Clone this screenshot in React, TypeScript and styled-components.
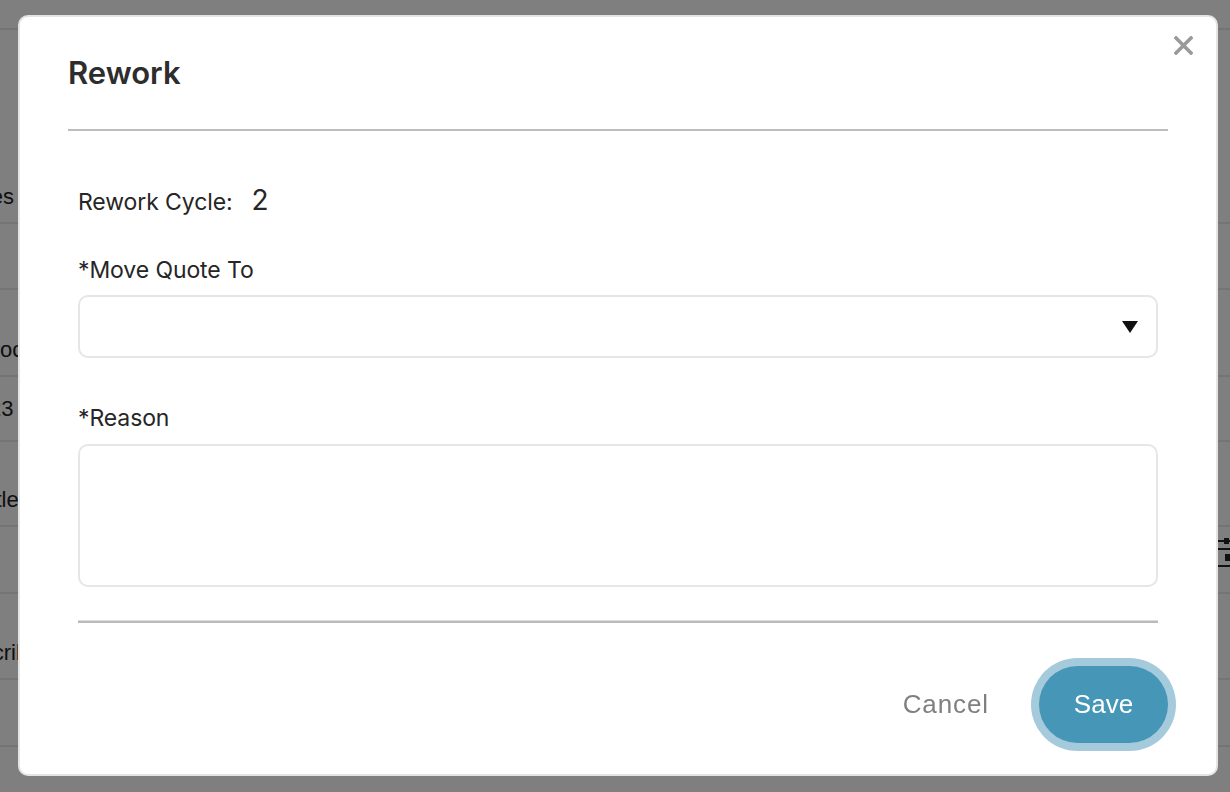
import React from "react";
import styled, { createGlobalStyle } from "styled-components";

const GlobalStyle = createGlobalStyle`
  html, body { margin: 0; padding: 0; }
  body {
    width: 1230px;
    height: 792px;
    overflow: hidden;
    background: #ffffff;
    font-family: "Liberation Sans", Arial, sans-serif;
  }
  * { box-sizing: border-box; }
`;

/* ---------- page behind the dialog ---------- */
const Page = styled.div`
  display: flex;
  flex-direction: column;
  width: 1230px;
  height: 792px;
  overflow: hidden;
`;

const PageRow = styled.div<{ $h: number; $align?: string; $last?: boolean }>`
  display: flex;
  justify-content: space-between;
  align-items: ${(p) => p.$align || "flex-end"};
  height: ${(p) => p.$h}px;
  flex: none;
  padding-bottom: ${(p) => (p.$align === "center" ? 0 : 12)}px;
  border-bottom: ${(p) => (p.$last ? "none" : "2px solid #e9e9e9")};
`;

const PageCell = styled.span`
  margin-left: -22px;
  font-size: 22px;
  line-height: 26px;
  color: #222;
  white-space: nowrap;
`;

const RowTool = styled.svg`
  flex: none;
  margin-right: -4px;
  align-self: center;
`;

/* ---------- dialog ---------- */
const Overlay = styled.div`
  position: fixed;
  inset: 0;
  background: rgba(0, 0, 0, 0.5);
  display: flex;
  align-items: flex-start;
  justify-content: flex-start;
  padding: 15px 12px 16px 18px;
`;

const Modal = styled.div`
  position: relative;
  width: 1200px;
  height: 761px;
  background: #ffffff;
  border: 2px solid #e4e4e4;
  border-radius: 10px;
  display: flex;
  flex-direction: column;
  font-family: "Inter", "Noto Sans", sans-serif;
  color: #2a2a2a;
`;

const CloseButton = styled.button`
  position: absolute;
  top: 18px;
  right: 23px;
  width: 20px;
  height: 20px;
  padding: 0;
  border: none;
  background: transparent;
  cursor: pointer;
  display: flex;
  align-items: center;
  justify-content: center;
`;

const Header = styled.div`
  margin: 0 48px;
  padding: 38px 0 38px;
  border-bottom: 2px solid #bdbdbd;
`;

const Title = styled.h2`
  margin: 0;
  font-size: 31px;
  line-height: 36px;
  font-weight: 600;
  color: #2d2d2d;
`;

const Body = styled.div`
  display: flex;
  flex-direction: column;
  padding: 53px 58px 0;
`;

const CycleRow = styled.div`
  display: flex;
  align-items: baseline;
  height: 32px;
  gap: 19px;
`;

const CycleLabel = styled.span`
  font-size: 23px;
  line-height: 32px;
  color: #262626;
  letter-spacing: -0.1px;
`;

const CycleValue = styled.span`
  font-size: 28px;
  line-height: 32px;
  color: #262626;
`;

const FieldLabel = styled.label<{ $gap: number }>`
  display: block;
  margin-top: ${(p) => p.$gap}px;
  font-size: 23px;
  line-height: 28px;
  color: #262626;
  letter-spacing: -0.1px;
`;

const SelectBox = styled.div`
  margin-top: 11px;
  height: 63px;
  border: 2px solid #e6e6e6;
  border-radius: 10px;
  display: flex;
  align-items: center;
  justify-content: flex-end;
  padding-right: 18px;
  background: #fff;
  cursor: pointer;
`;

const TextArea = styled.textarea`
  margin-top: 12px;
  height: 143px;
  width: 100%;
  border: 2px solid #e6e6e6;
  border-radius: 10px;
  resize: none;
  outline: none;
  padding: 12px 16px;
  font-family: inherit;
  font-size: 20px;
  background: #fff;
`;

const Divider = styled.div`
  margin-top: 33px;
  height: 3px;
  border-top: 1px solid #dcdcdc;
  border-bottom: 2px solid #bababa;
`;

const Footer = styled.div`
  display: flex;
  justify-content: flex-end;
  align-items: center;
  gap: 34px;
  padding: 43px 48px 0 0;
`;

const CancelButton = styled.button`
  border: none;
  background: transparent;
  padding: 0 16px;
  font-family: "Liberation Sans", Arial, sans-serif;
  font-size: 26px;
  letter-spacing: 0.9px;
  color: #808080;
  cursor: pointer;
`;

const SaveButton = styled.button`
  width: 129px;
  height: 77px;
  border: none;
  border-radius: 39px;
  background: #4596b7;
  box-shadow: 0 0 0 8px #a5cadb;
  color: #ffffff;
  font-family: "Liberation Sans", Arial, sans-serif;
  font-size: 26px;
  cursor: pointer;
`;

const rows: { h: number; text?: string; align?: string; tool?: boolean }[] = [
  { h: 30 },
  { h: 194, text: "Yes" },
  { h: 66 },
  { h: 87, text: "Process" },
  { h: 65, text: "x23", align: "center" },
  { h: 85, text: "Title" },
  { h: 67, tool: true },
  { h: 86, text: "Scribe" },
  { h: 67 },
  { h: 45 },
];

export default function App() {
  return (
    <>
      <GlobalStyle />
      <Page>
        {rows.map((r, i) => (
          <PageRow key={i} $h={r.h} $align={r.align} $last={i === rows.length - 1}>
            <PageCell>{r.text || ""}</PageCell>
            {r.tool && (
              <RowTool width="24" height="32" viewBox="0 0 24 32">
                <line x1="0" y1="3" x2="24" y2="3" stroke="#222" strokeWidth="2" />
                <rect x="14" y="0" width="5" height="6" fill="#222" />
                <line x1="0" y1="11" x2="24" y2="11" stroke="#222" strokeWidth="2" />
                <rect x="15" y="16" width="7" height="7" fill="#222" />
                <line x1="0" y1="28" x2="24" y2="28" stroke="#222" strokeWidth="2" />
              </RowTool>
            )}
          </PageRow>
        ))}
      </Page>
      <Overlay>
        <Modal role="dialog" aria-labelledby="rework-title">
          <CloseButton aria-label="Close">
            <svg width="19" height="19" viewBox="0 0 19 19">
              <path d="M2 2 L17 17 M17 2 L2 17" stroke="#9a9a9a" strokeWidth="3.6" strokeLinecap="square" />
            </svg>
          </CloseButton>
          <Header>
            <Title id="rework-title">Rework</Title>
          </Header>
          <Body>
            <CycleRow>
              <CycleLabel>Rework Cycle:</CycleLabel>
              <CycleValue>2</CycleValue>
            </CycleRow>
            <FieldLabel $gap={40}>*Move Quote To</FieldLabel>
            <SelectBox role="combobox" aria-expanded="false">
              <svg width="16" height="12" viewBox="0 0 16 12">
                <path d="M0 0 H16 L8 12 Z" fill="#111" />
              </svg>
            </SelectBox>
            <FieldLabel $gap={46}>*Reason</FieldLabel>
            <TextArea />
            <Divider />
          </Body>
          <Footer>
            <CancelButton>Cancel</CancelButton>
            <SaveButton>Save</SaveButton>
          </Footer>
        </Modal>
      </Overlay>
    </>
  );
}
